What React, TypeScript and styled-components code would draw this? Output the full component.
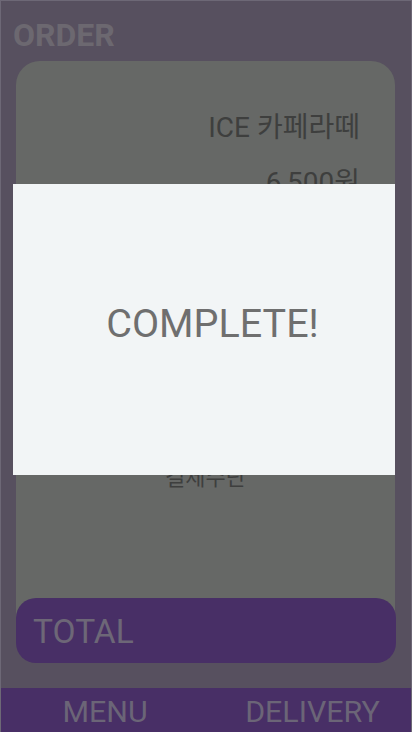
import React from "react";
import styled, { createGlobalStyle } from "styled-components";

const Global = createGlobalStyle`
  html, body { margin: 0; padding: 0; background: #57505f; }
  * { box-sizing: border-box; }
`;

const Screen = styled.div`
  position: relative;
  width: 412px;
  height: 732px;
  display: flex;
  flex-direction: column;
  background: #57505f;
  border: 1px solid #6d6876;
  border-bottom: none;
  overflow: hidden;
  font-family: Roboto, "Noto Sans CJK KR", sans-serif;
`;

const Header = styled.h1`
  margin: 0;
  padding: 16px 0 0 12px;
  font-size: 32px;
  line-height: 36px;
  font-weight: 700;
  color: #6c6870;
`;

const Card = styled.section`
  flex: 1;
  margin: 8px 16px 0 15px;
  padding: 50px 35px 0 35px;
  background: #666866;
  border-radius: 24px 24px 0 0;
  display: flex;
  flex-direction: column;
`;

const ItemLine = styled.div`
  text-align: right;
  font-size: 28px;
  line-height: 33.6px;
  color: #3e3f3e;
  margin-bottom: 21px;
`;

const SectionTitle = styled.div`
  margin-top: 245px;
  text-align: center;
  font-size: 22px;
  line-height: 26.4px;
  color: #3e3f3e;
`;

const TotalBar = styled.div`
  position: relative;
  margin: -32px 15px 25px 15px;
  height: 65px;
  background: #482f66;
  border-radius: 20px;
  display: flex;
  align-items: center;
  padding: 2px 0 0 17px;
  font-size: 33.5px;
  color: #6d6777;
`;

const Nav = styled.nav`
  height: 44px;
  display: grid;
  grid-template-columns: 1fr 1fr;
  background: #482f66;
`;

const NavItem = styled.div<{ $shift?: number }>`
  text-align: center;
  font-size: 30.4px;
  line-height: 41px;
  padding-top: 3px;
  color: #6b6577;
  padding-left: ${(p) => p.$shift ?? 0}px;
`;

const Modal = styled.div`
  position: absolute;
  top: 183px;
  left: 12px;
  width: 382px;
  height: 291px;
  background: #f2f5f6;
  display: flex;
  align-items: center;
  justify-content: center;
  padding: 0 0 11px 17px;
`;

const ModalText = styled.div`
  font-size: 39.5px;
  line-height: 46px;
  color: #6f6f6f;
`;

export default function App() {
  return (
    <>
      <Global />
      <Screen>
        <Header>ORDER</Header>
        <Card>
          <ItemLine>ICE 카페라떼</ItemLine>
          <ItemLine>6,500원</ItemLine>
          <SectionTitle>결제수단</SectionTitle>
        </Card>
        <TotalBar>TOTAL</TotalBar>
        <Nav>
          <NavItem $shift={3}>MENU</NavItem>
          <NavItem $shift={8}>DELIVERY</NavItem>
        </Nav>
        <Modal>
          <ModalText>COMPLETE!</ModalText>
        </Modal>
      </Screen>
    </>
  );
}
